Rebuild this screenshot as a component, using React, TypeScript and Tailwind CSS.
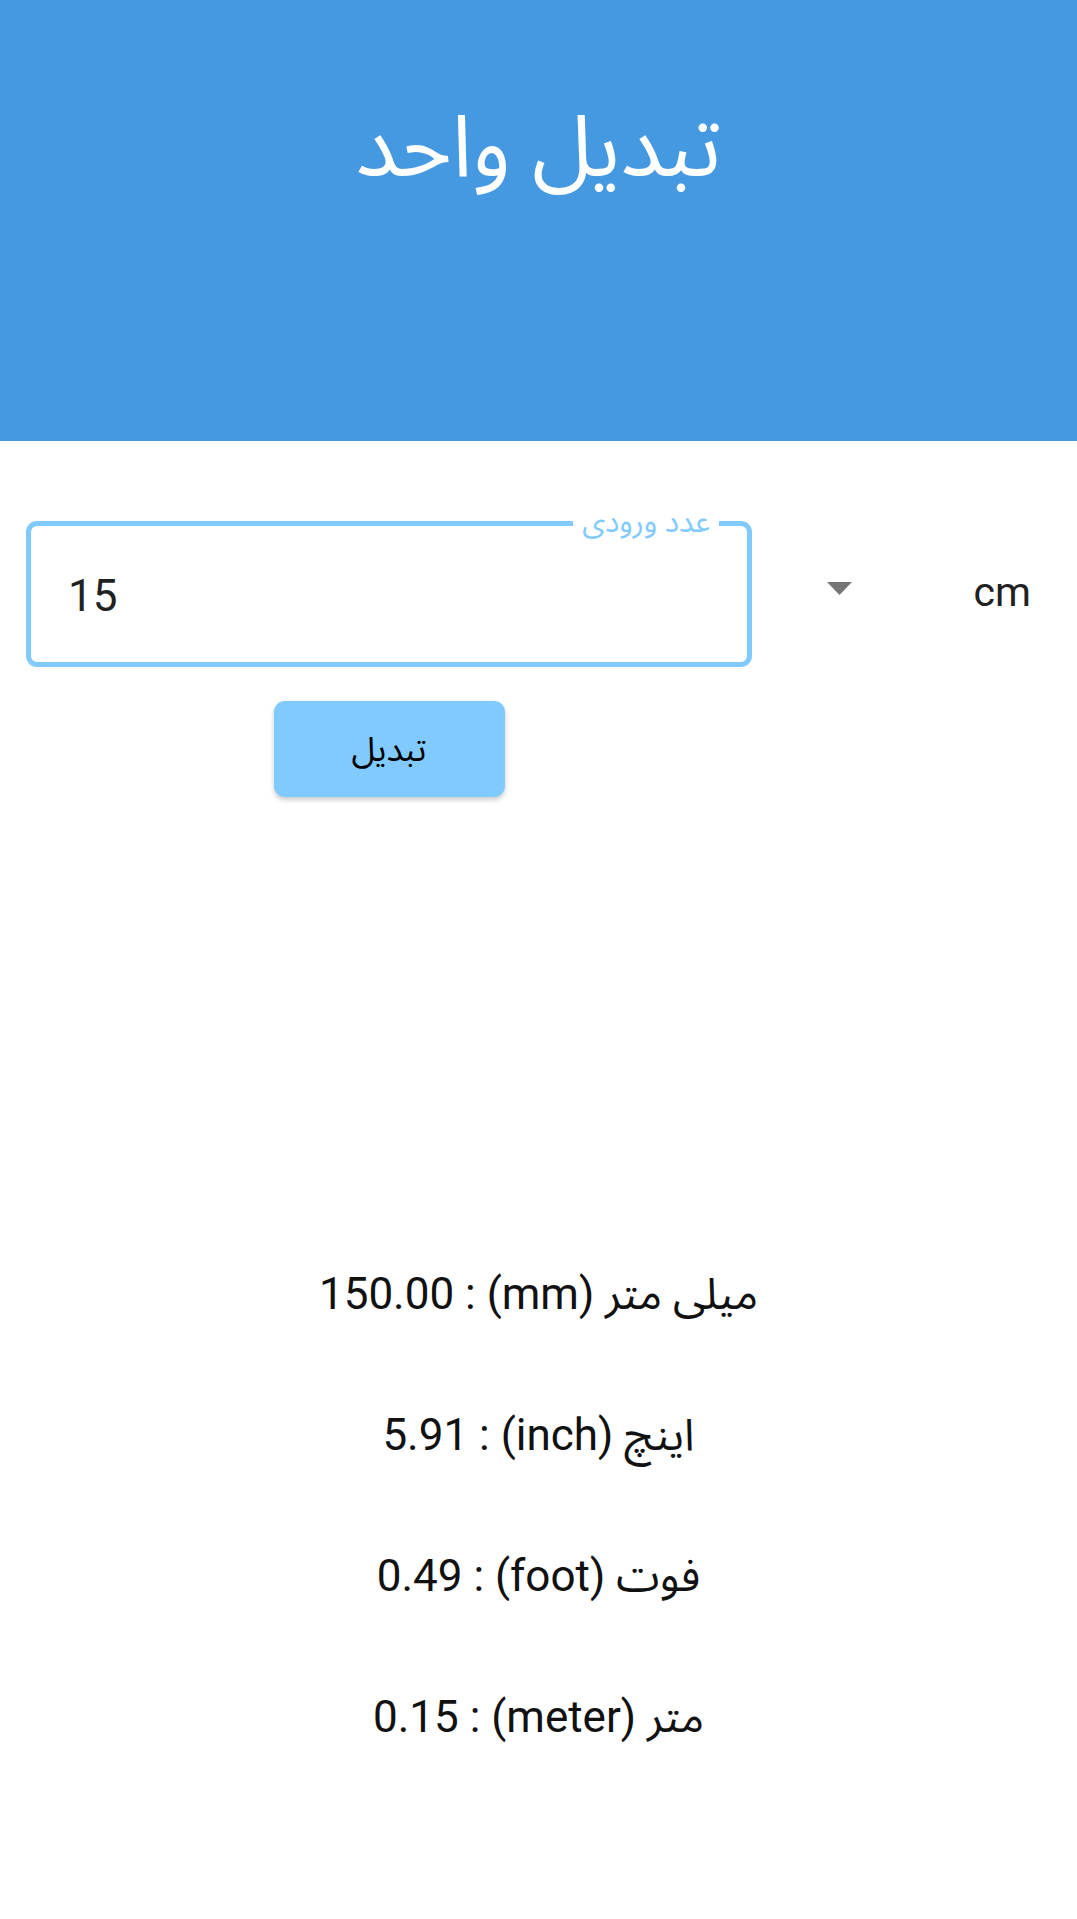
import React from "react";

const RESULTS = [
  { label: "میلی متر (mm)", value: "150.00" },
  { label: "اینچ (inch)", value: "5.91" },
  { label: "فوت (foot)", value: "0.49" },
  { label: "متر (meter)", value: "0.15" },
];

const font = "font-['Roboto','Noto_Sans_Arabic','Noto_Naskh_Arabic','DejaVu_Sans',sans-serif]";

export default function App() {
  return (
    <div className={`w-[1077px] min-h-[1919px] bg-white ${font}`}>
      {/* header */}
      <header className="h-[441px] bg-[#4499e0] flex justify-center">
        <h1 dir="rtl" className="mt-[92px] h-[110px] text-[86px] leading-[110px] text-white">
          تبدیل واحد
        </h1>
      </header>

      {/* input + unit spinner */}
      <div className="mt-[80px] flex">
        <div className="ml-[26px] w-[726px] flex flex-col items-center">
          <div className="relative w-full h-[146px] rounded-[11px] border-[5.5px] border-[#80caff] flex items-center pl-[37px] pt-[4px]">
            <span className="text-[44px] leading-none text-[#212121]">15</span>
            <span
              dir="rtl"
              className="absolute -top-[22px] right-[28px] bg-white px-[9px] text-[30px] leading-[36px] text-[#80caff]"
            >
              عدد ورودی
            </span>
          </div>
          <button
            dir="rtl"
            className="mt-[34px] w-[231px] h-[96px] rounded-[11px] bg-[#80caff] text-[34px] text-black shadow-[0_3px_5px_rgba(0,0,0,0.2)]"
          >
            تبدیل
          </button>
        </div>

        <div className="flex-1 h-[146px] flex items-center pl-[75px] pr-[46px]">
          <svg width="25" height="13" viewBox="0 0 25 13" className="-mt-[11px]">
            <path d="M0 0 L25 0 L12.5 13 Z" fill="#757575" />
          </svg>
          <span className="ml-auto text-[41px] leading-none text-[#212121] -mt-[4px]">cm</span>
        </div>
      </div>

      {/* results */}
      <div className="mt-[471px] flex flex-col items-center gap-[89px]">
        {RESULTS.map((r) => (
          <p key={r.label} dir="rtl" className="text-[44px] leading-[52px] text-[#111]">
            {r.label} : {r.value}
          </p>
        ))}
      </div>
    </div>
  );
}
